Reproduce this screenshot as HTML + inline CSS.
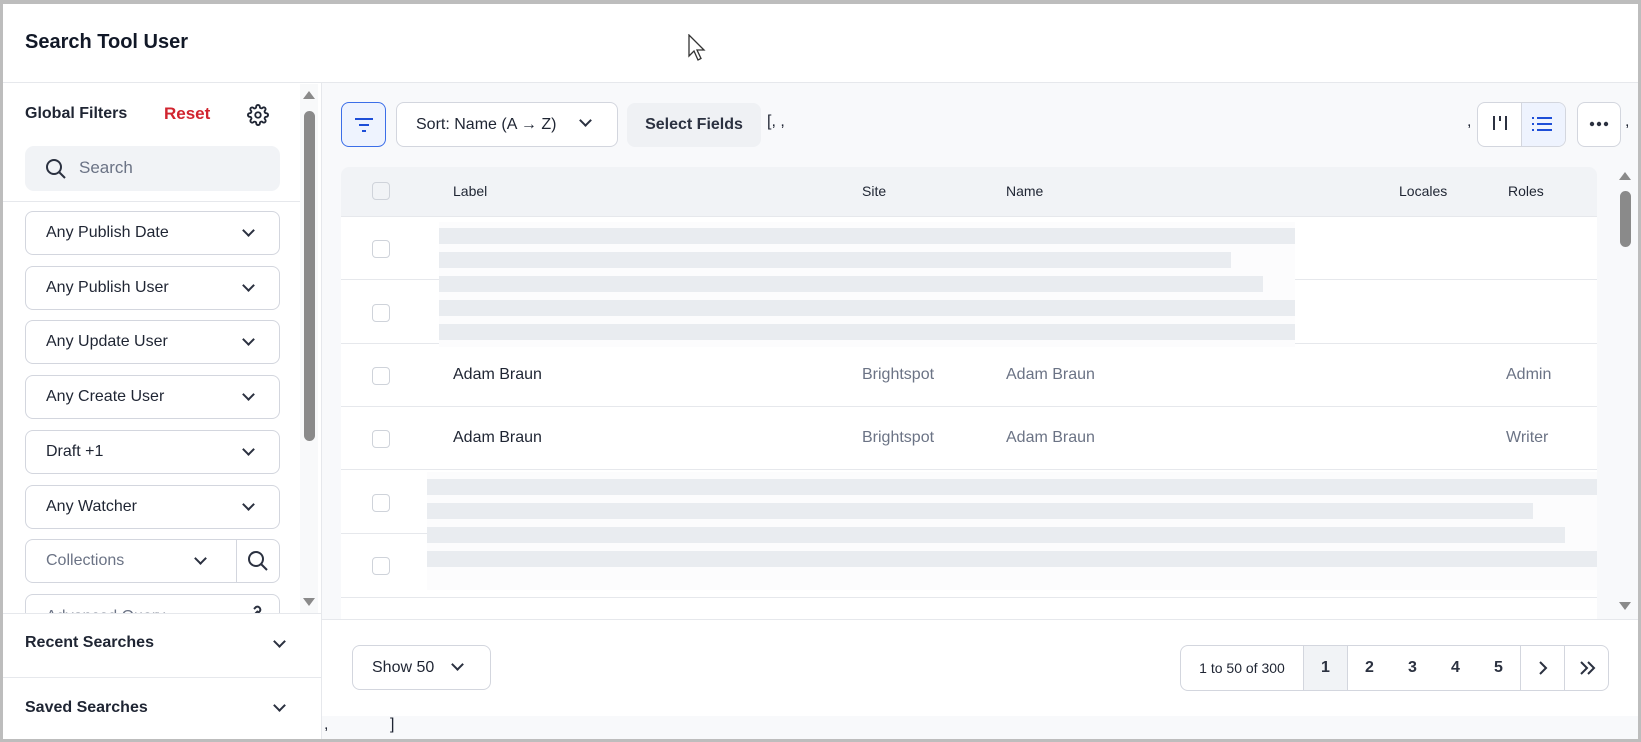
<!DOCTYPE html>
<html><head><meta charset="utf-8"><style>
*{box-sizing:border-box;margin:0;padding:0}
body{width:1641px;height:742px;overflow:hidden;background:#fff;font-family:"Liberation Sans",sans-serif;color:#1f2533;position:relative}
.a{position:absolute}
.frame{left:0;top:0;width:1641px;height:742px;border:3px solid #bdbdbd;border-top-width:4px}
.dd{position:absolute;left:25px;width:255px;height:44px;border:1px solid #d3d6de;border-radius:8px;background:#fff;font-size:16px;line-height:42px;padding-left:20px;color:#1f2533}
.chev{position:absolute;width:9px;height:9px;border-right:2px solid #2b3140;border-bottom:2px solid #2b3140;transform:rotate(45deg)}
.sk{position:absolute;height:16px;background:#e9ecf0}
.row{position:absolute;left:341px;width:1256px;height:1px;background:#e6e8ec}
.cb{position:absolute;left:372px;width:18px;height:18px;border:1px solid #cfd3da;border-radius:4px;background:#fff}
.cell{position:absolute;font-size:16px}
.pg{position:absolute;top:0;height:44px;line-height:44px;text-align:center;font-size:16px;font-weight:bold;color:#2b3140;border-left:1px solid #d3d6de}
</style></head><body>
<div class="a" style="left:25px;top:31px;font-size:20px;font-weight:bold;color:#111827">Search Tool User</div>
<svg class="a" style="left:688px;top:34px" width="20" height="28" viewBox="0 0 20 28"><path d="M1 1 L1 22 L6 17 L10 26 L13 24.5 L9 16 L16 16 Z" fill="#fff" stroke="#333" stroke-width="1.3"/></svg>
<div class="a" style="left:3px;top:82px;width:1635px;height:1px;background:#e6e8ec"></div>

<div class="a" style="left:321px;top:83px;width:1px;height:656px;background:#e6e8ec"></div>
<div class="a" style="left:25px;top:105px;font-size:16px;font-weight:bold">Global Filters</div>
<div class="a" style="left:164px;top:104px;font-size:17px;font-weight:bold;color:#d1242f">Reset</div>
<svg class="a" style="left:247px;top:104px" width="22" height="22" viewBox="0 0 24 24" fill="none" stroke="#1f2533" stroke-width="2"><circle cx="12" cy="12" r="3"/><path d="M19.4 15a1.65 1.65 0 0 0 .33 1.82l.06.06a2 2 0 1 1-2.83 2.830l-.06-.06a1.650 1.650 0 0 0-1.82-.33 1.65 1.65 0 0 0-1 1.51V21a2 2 0 1 1-4 0v-.09A1.65 1.65 0 0 0 9 19.4a1.65 1.65 0 0 0-1.82.33l-.06.06a2 2 0 1 1-2.830-2.83l.06-.06A1.65 1.65 0 0 0 4.68 15a1.65 1.65 0 0 0-1.51-1H3a2 2 0 1 1 0-4h.09A1.65 1.65 0 0 0 4.6 9a1.65 1.65 0 0 0-.33-1.82l-.06-.06a2 2 0 1 1 2.83-2.83l.06.06A1.65 1.65 0 0 0 9 4.68 1.65 1.65 0 0 0 10 3.17V3a2 2 0 1 1 4 0v.09a1.65 1.65 0 0 0 1 1.51 1.65 1.65 0 0 0 1.82-.33l.06-.06a2 2 0 1 1 2.83 2.83l-.06.06A1.65 1.65 0 0 0 19.4 9a1.65 1.65 0 0 0 1.51 1H21a2 2 0 1 1 0 4h-.09a1.65 1.65 0 0 0-1.51 1z"/></svg>
<div class="a" style="left:25px;top:146px;width:255px;height:45px;background:#f1f3f6;border-radius:9px"></div>
<svg class="a" style="left:45px;top:158px" width="22" height="22" viewBox="0 0 22 22" fill="none" stroke="#2b3140" stroke-width="2"><circle cx="9" cy="9" r="7"/><path d="M14 14l6 6"/></svg>
<div class="a" style="left:79px;top:158px;font-size:17px;color:#6b7385">Search</div>
<div class="a" style="left:3px;top:201px;width:297px;height:1px;background:#e6e8ec"></div>

<div class="dd" style="top:211px">Any Publish Date<span class="chev" style="right:26px;top:14px"></span></div>
<div class="dd" style="top:266px">Any Publish User<span class="chev" style="right:26px;top:14px"></span></div>
<div class="dd" style="top:320px">Any Update User<span class="chev" style="right:26px;top:14px"></span></div>
<div class="dd" style="top:375px">Any Create User<span class="chev" style="right:26px;top:14px"></span></div>
<div class="dd" style="top:430px">Draft +1<span class="chev" style="right:26px;top:14px"></span></div>
<div class="dd" style="top:485px">Any Watcher<span class="chev" style="right:26px;top:14px"></span></div>
<div class="dd" style="top:539px;color:#6b7385">Collections<span class="chev" style="right:74px;top:14px"></span><span style="position:absolute;left:210px;top:0;width:1px;height:42px;background:#d3d6de"></span>
<svg style="position:absolute;left:221px;top:10px" width="22" height="22" viewBox="0 0 22 22" fill="none" stroke="#2b3140" stroke-width="2"><circle cx="9" cy="9" r="7"/><path d="M14 14l6 6"/></svg></div>
<div class="dd" style="top:594px;height:30px;overflow:hidden;color:#6b7385;line-height:44px">Advanced Query
<svg style="position:absolute;left:220px;top:10px" width="18" height="18" viewBox="0 0 18 18" fill="none" stroke="#2b3140" stroke-width="2"><path d="M6 12l6-6M8 4l2-2a3 3 0 0 1 4 4l-2 2"/></svg></div>
<div class="a" style="left:300px;top:84px;width:18px;height:529px;background:#f8f9fa"></div>
<div class="a" style="left:303px;top:91px;width:0;height:0;border-left:6px solid transparent;border-right:6px solid transparent;border-bottom:8px solid #8a8a8a"></div>
<div class="a" style="left:304px;top:111px;width:11px;height:330px;background:#8a8a8a;border-radius:6px"></div>
<div class="a" style="left:303px;top:598px;width:0;height:0;border-left:6px solid transparent;border-right:6px solid transparent;border-top:8px solid #8a8a8a"></div>
<div class="a" style="left:3px;top:613px;width:318px;height:126px;background:#fff;border-top:1px solid #e6e8ec"></div>
<div class="a" style="left:25px;top:634px;font-size:16px;font-weight:bold">Recent Searches</div>
<span class="chev a" style="left:275px;top:637px"></span>
<div class="a" style="left:3px;top:677px;width:318px;height:1px;background:#e6e8ec"></div>
<div class="a" style="left:25px;top:699px;font-size:16px;font-weight:bold">Saved Searches</div>
<span class="chev a" style="left:275px;top:701px"></span>

<div class="a" style="left:322px;top:83px;width:1316px;height:536px;background:#f8f9fb"></div>
<div class="a" style="left:341px;top:102px;width:45px;height:45px;border:1.5px solid #3b6ee8;border-radius:8px;background:#eef3fe"></div>
<svg class="a" style="left:353px;top:115px" width="22" height="20" viewBox="0 0 22 20" stroke="#1d4ed8" stroke-width="2"><path d="M2 4h18M6 10h10M9 16h4"/></svg>
<div class="a" style="left:396px;top:102px;width:222px;height:45px;border:1px solid #d3d6de;border-radius:8px;background:#fff;font-size:16px;line-height:43px;padding-left:19px">Sort: Name (A → Z)</div>
<span class="chev a" style="left:581px;top:116px"></span>
<div class="a" style="left:627px;top:103px;width:134px;height:44px;border-radius:8px;background:#eff1f4;font-size:16px;font-weight:bold;line-height:44px;text-align:center;color:#2b3140">Select Fields</div>
<div class="a" style="left:767px;top:113px;font-size:16px">[, ,</div>
<div class="a" style="left:1467px;top:113px;font-size:16px">,</div>
<div class="a" style="left:1477px;top:102px;width:89px;height:45px;border:1px solid #d3d6de;border-radius:8px;background:#fff;overflow:hidden">
<div style="position:absolute;left:43px;top:0;width:46px;height:45px;background:#eef3fe;border-left:1px solid #d3d6de"></div></div>
<svg class="a" style="left:1492px;top:114px" width="16" height="18" viewBox="0 0 16 18" stroke="#2b3140" stroke-width="2"><path d="M2 2v14M14 2v14M8 2v5"/></svg>
<svg class="a" style="left:1531px;top:115px" width="22" height="18" viewBox="0 0 22 18" stroke="#1d4ed8" stroke-width="2"><path d="M6 3h15M6 9h15M6 15h15M1 3h2M1 9h2M1 15h2"/></svg>
<div class="a" style="left:1577px;top:102px;width:44px;height:45px;border:1px solid #d3d6de;border-radius:8px;background:#fff"></div>
<svg class="a" style="left:1589px;top:121px" width="20" height="6" viewBox="0 0 20 6" fill="#2b3140"><circle cx="3" cy="3" r="2.2"/><circle cx="10" cy="3" r="2.2"/><circle cx="17" cy="3" r="2.2"/></svg>
<div class="a" style="left:1625px;top:113px;font-size:16px">,</div>

<div class="a" style="left:341px;top:167px;width:1256px;height:452px;background:#fff;border-radius:8px 8px 0 0;overflow:hidden">
<div style="position:absolute;left:0;top:0;width:100%;height:50px;background:#f1f3f6"></div></div>
<div class="cb" style="top:182px;background:#f1f3f6"></div>
<div class="cell" style="left:453px;top:183px;font-size:14px">Label</div>
<div class="cell" style="left:862px;top:183px;font-size:14px">Site</div>
<div class="cell" style="left:1006px;top:183px;font-size:14px">Name</div>
<div class="cell" style="left:1399px;top:183px;font-size:14px">Locales</div>
<div class="cell" style="left:1508px;top:183px;font-size:14px">Roles</div>
<div class="row" style="top:216px"></div>
<div class="row" style="top:279px"></div>
<div class="row" style="top:343px"></div>
<div class="row" style="top:406px"></div>
<div class="row" style="top:469px"></div>
<div class="row" style="top:533px"></div>
<div class="row" style="top:597px"></div>
<div class="a" style="left:439px;top:222px;width:856px;height:125px;background:#fcfcfd"></div>
<div class="sk" style="left:439px;top:228px;width:856px"></div>
<div class="sk" style="left:439px;top:252px;width:792px"></div>
<div class="sk" style="left:439px;top:276px;width:824px"></div>
<div class="sk" style="left:439px;top:300px;width:856px"></div>
<div class="sk" style="left:439px;top:324px;width:856px"></div>
<div class="cb" style="top:240px"></div>
<div class="cb" style="top:304px"></div>
<div class="cb" style="top:367px"></div>
<div class="cb" style="top:430px"></div>
<div class="cb" style="top:494px"></div>
<div class="cb" style="top:557px"></div>
<div class="cell" style="left:453px;top:366px">Adam Braun</div>
<div class="cell" style="left:862px;top:366px;color:#6b7385">Brightspot</div>
<div class="cell" style="left:1006px;top:366px;color:#6b7385">Adam Braun</div>
<div class="cell" style="left:1506px;top:366px;color:#6b7385">Admin</div>
<div class="cell" style="left:453px;top:429px">Adam Braun</div>
<div class="cell" style="left:862px;top:429px;color:#6b7385">Brightspot</div>
<div class="cell" style="left:1006px;top:429px;color:#6b7385">Adam Braun</div>
<div class="cell" style="left:1506px;top:429px;color:#6b7385">Writer</div>
<div class="a" style="left:427px;top:472px;width:1170px;height:118px;background:#fcfcfd"></div>
<div class="sk" style="left:427px;top:479px;width:1170px"></div>
<div class="sk" style="left:427px;top:503px;width:1106px"></div>
<div class="sk" style="left:427px;top:527px;width:1138px"></div>
<div class="sk" style="left:427px;top:551px;width:1170px"></div>
<div class="a" style="left:1619px;top:172px;width:0;height:0;border-left:6px solid transparent;border-right:6px solid transparent;border-bottom:8px solid #8a8a8a"></div>
<div class="a" style="left:1620px;top:191px;width:11px;height:56px;background:#8a8a8a;border-radius:6px"></div>
<div class="a" style="left:1619px;top:602px;width:0;height:0;border-left:6px solid transparent;border-right:6px solid transparent;border-top:8px solid #8a8a8a"></div>
<div class="a" style="left:322px;top:619px;width:1316px;height:1px;background:#e6e8ec"></div>

<div class="a" style="left:352px;top:645px;width:139px;height:45px;border:1px solid #d3d6de;border-radius:8px;font-size:16px;line-height:43px;padding-left:19px">Show 50</div>
<span class="chev a" style="left:453px;top:660px"></span>
<div class="a" style="left:1180px;top:645px;width:429px;height:46px;border:1px solid #d3d6de;border-radius:8px;overflow:hidden">
<div style="position:absolute;left:0;top:0;width:122px;height:44px;line-height:44px;text-align:center;font-size:14px">1 to 50 of 300</div>
<div class="pg" style="left:122px;width:44px;background:#f1f3f6">1</div>
<div class="pg" style="left:166px;width:44px">2</div>
<div class="pg" style="left:210px;width:43px;border-left:none">3</div>
<div class="pg" style="left:253px;width:43px;border-left:none">4</div>
<div class="pg" style="left:296px;width:43px;border-left:none">5</div>
<div class="pg" style="left:339px;width:44px"><svg style="position:absolute;left:16px;top:15px" width="12" height="14" viewBox="0 0 12 14" fill="none" stroke="#2b3140" stroke-width="2"><path d="M3 1l6 6-6 6"/></svg></div>
<div class="pg" style="left:383px;width:46px"><svg style="position:absolute;left:14px;top:15px" width="18" height="14" viewBox="0 0 18 14" fill="none" stroke="#2b3140" stroke-width="2"><path d="M2 1l6 6-6 6M9 1l6 6-6 6"/></svg></div>
</div>
<div class="a" style="left:322px;top:716px;width:1316px;height:23px;background:#f8f9fb"></div>
<div class="a" style="left:324px;top:716px;font-size:16px">,</div>
<div class="a" style="left:390px;top:716px;font-size:16px">]</div>

<div class="a frame"></div>
</body></html>
